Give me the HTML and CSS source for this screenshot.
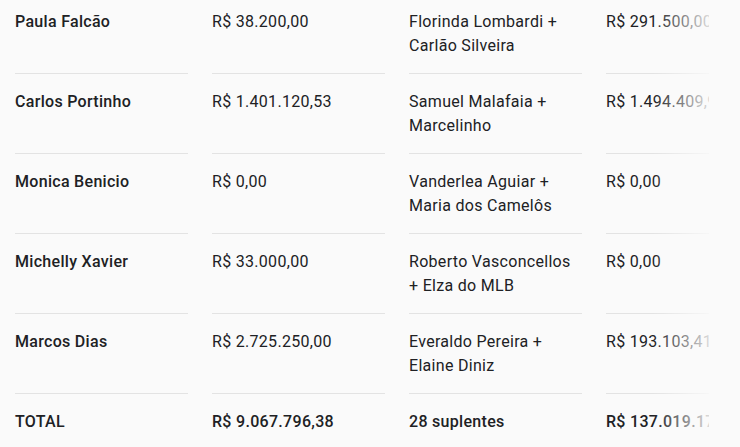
FILE: index.html
```html
<!DOCTYPE html>
<html lang="pt-BR">
<head>
	<meta charset="UTF-8">
	<title>Suplentes</title>
	<link rel="stylesheet" href="styles.css">
</head>
<body>

<div class="scroller">
	<div class="grid">
		<div class="row">
			<div class="cell name">Paula Falcão</div>
			<div class="cell">R$ 38.200,00</div>
			<div class="cell">Florinda Lombardi + Carlão Silveira</div>
			<div class="cell">R$ 291.500,00</div>
		</div>
		<div class="row">
			<div class="cell name">Carlos Portinho</div>
			<div class="cell">R$ 1.401.120,53</div>
			<div class="cell">Samuel Malafaia + Marcelinho</div>
			<div class="cell">R$ 1.494.409,93</div>
		</div>
		<div class="row">
			<div class="cell name">Monica Benicio</div>
			<div class="cell">R$ 0,00</div>
			<div class="cell">Vanderlea Aguiar + Maria dos Camelôs</div>
			<div class="cell">R$ 0,00</div>
		</div>
		<div class="row">
			<div class="cell name">Michelly Xavier</div>
			<div class="cell">R$ 33.000,00</div>
			<div class="cell">Roberto Vasconcellos + Elza do MLB</div>
			<div class="cell">R$ 0,00</div>
		</div>
		<div class="row">
			<div class="cell name">Marcos Dias</div>
			<div class="cell">R$ 2.725.250,00</div>
			<div class="cell">Everaldo Pereira + Elaine Diniz</div>
			<div class="cell">R$ 193.103,41</div>
		</div>
		<div class="row total">
			<div class="cell">TOTAL</div>
			<div class="cell">R$ 9.067.796,38</div>
			<div class="cell">28 suplentes</div>
			<div class="cell">R$ 137.019.178,00</div>
		</div>
	</div>
	<div class="fade"></div>
</div>

</body>
</html>
```

FILE: styles.css
```css
body {
	margin: 0;
	background: #fafafa;
	color: #202124;
	font-family: 'Roboto', 'Liberation Sans', sans-serif;
	font-size: 16px;
	line-height: 24px;
	letter-spacing: 0.3px;
}

.scroller {
	position: relative;
	width: 709px;
	overflow: hidden;
	margin-top: -6px;
}

.grid {
	padding-left: 15px;
	width: 788px;
}

.row {
	display: grid;
	grid-template-columns: repeat(4, 173px);
	column-gap: 24px;
}

.cell {
	padding: 16px 0 15px;
	min-height: 48px;
	border-bottom: 1px solid #e3e3e3;
}

.cell:nth-child(4) {
	white-space: nowrap;
}

.name {
	font-weight: 500;
}

.total .cell {
	font-weight: 500;
	border-bottom: none;
	min-height: 24px;
}

.fade {
	position: absolute;
	top: 0;
	bottom: 0;
	right: 0;
	width: 56px;
	background: linear-gradient(to right, rgba(250, 250, 250, 0), rgba(250, 250, 250, 0.85));
}
```
